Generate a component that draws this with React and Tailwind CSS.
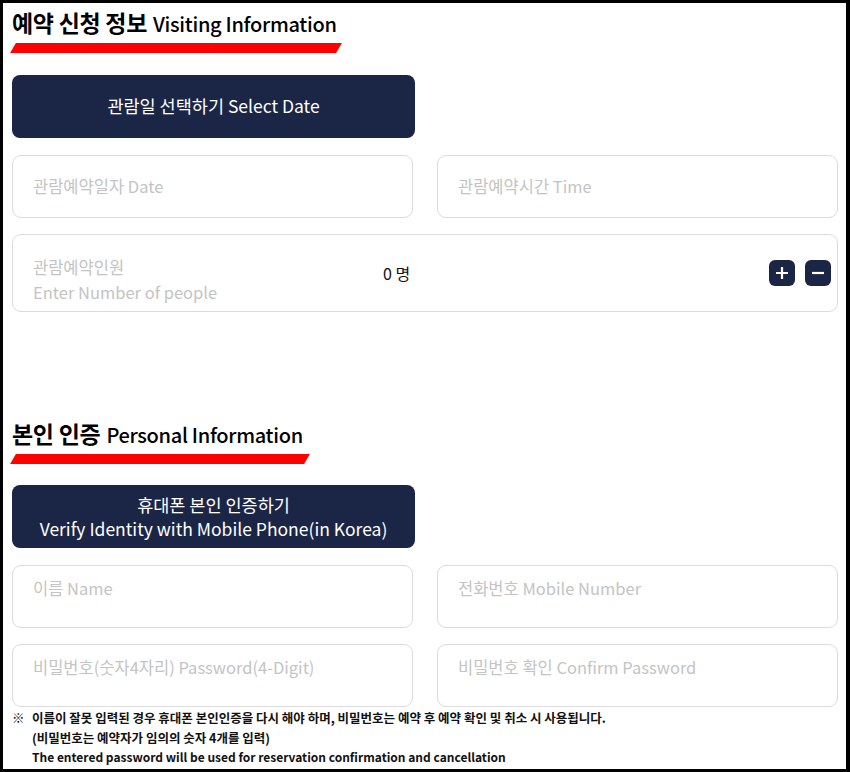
const font = { fontFamily: '"Noto Sans CJK KR", "Noto Sans", sans-serif' };

function SectionTitle({ ko, en, barWidth }) {
  return (
    <div>
      <h2 className="flex items-baseline gap-[6px] leading-none text-black">
        <span className="text-[23px] font-bold tracking-[-0.3px]">{ko}</span>
        <span className="text-[20px] font-medium tracking-[-0.3px]">{en}</span>
      </h2>
      <div
        className="mt-[9px] ml-[1px] h-[10px] -skew-x-[30deg] bg-[#ff0000]"
        style={{ width: barWidth }}
      />
    </div>
  );
}

function Field({ label, top }) {
  return (
    <div
      className={
        top
          ? "h-[63px] rounded-[9px] border border-[#dcdcdc] px-5 pt-[10px] text-[16.5px] leading-[24px] text-[#c4c4c4]"
          : "flex h-[63px] items-center rounded-[9px] border border-[#dcdcdc] px-5 text-[16.5px] text-[#c4c4c4]"
      }
    >
      {label}
    </div>
  );
}

export default function App() {
  return (
    <div
      className="h-[772px] w-[850px] border-t-[3px] border-b-[3px] border-l-[3px] border-r-[4px] border-black bg-white"
      style={font}
    >
      <div className="pl-[9px] pr-[8px]">
        {/* Visiting information */}
        <div className="pt-[8px]">
          <SectionTitle ko="예약 신청 정보" en="Visiting Information" barWidth={326} />
        </div>

        <button className="mt-[22px] flex h-[63px] w-[403px] items-center justify-center rounded-[8px] bg-[#1b2647] text-[17.5px] text-white">
          관람일 선택하기 Select Date
        </button>

        <div className="mt-[17px] grid grid-cols-2 gap-6">
          <Field label="관람예약일자 Date" />
          <Field label="관람예약시간 Time" />
        </div>

        <div className="mt-[16px] flex h-[78px] items-center rounded-[9px] border border-[#dcdcdc] pl-5 pr-[6px]">
          <div className="w-[350px] pt-[14px] text-[16.5px] leading-[25px] text-[#c4c4c4]">
            <p>관람예약인원</p>
            <p>Enter Number of people</p>
          </div>
          <div className="flex-1 text-[16px] text-[#111]">0 명</div>
          <div className="flex gap-[10px]">
            <button className="flex h-[26px] w-[26px] items-center justify-center rounded-[6px] bg-[#1b2647]">
              <svg width="16" height="16" viewBox="0 0 16 16">
                <path d="M8 2v12M2 8h12" stroke="white" strokeWidth="2.2" />
              </svg>
            </button>
            <button className="flex h-[26px] w-[26px] items-center justify-center rounded-[6px] bg-[#1b2647]">
              <svg width="16" height="16" viewBox="0 0 16 16">
                <path d="M2 8h12" stroke="white" strokeWidth="2.2" />
              </svg>
            </button>
          </div>
        </div>

        {/* Personal information */}
        <div className="pt-[110px]">
          <SectionTitle ko="본인 인증" en="Personal Information" barWidth={294} />
        </div>

        <button className="mt-[21px] flex h-[63px] w-[403px] flex-col items-center justify-center rounded-[8px] bg-[#1b2647] text-[17.5px] leading-[24px] text-white">
          <span>휴대폰 본인 인증하기</span>
          <span>Verify Identity with Mobile Phone(in Korea)</span>
        </button>

        <div className="mt-[17px] grid grid-cols-2 gap-x-6 gap-y-[16px]">
          <Field top label="이름 Name" />
          <Field top label="전화번호 Mobile Number" />
          <Field top label="비밀번호(숫자4자리) Password(4-Digit)" />
          <Field top label="비밀번호 확인 Confirm Password" />
        </div>

        <div className="mt-[1px] flex text-[12.5px] font-bold leading-[19.5px] text-[#111]">
          <span className="w-[20px] shrink-0 font-normal">※</span>
          <div>
            <p>이름이 잘못 입력된 경우 휴대폰 본인인증을 다시 해야 하며, 비밀번호는 예약 후 예약 확인 및 취소 시 사용됩니다.</p>
            <p>(비밀번호는 예약자가 임의의 숫자 4개를 입력)</p>
            <p className="text-[12px]">The entered password will be used for reservation confirmation and cancellation</p>
          </div>
        </div>
      </div>
    </div>
  );
}
